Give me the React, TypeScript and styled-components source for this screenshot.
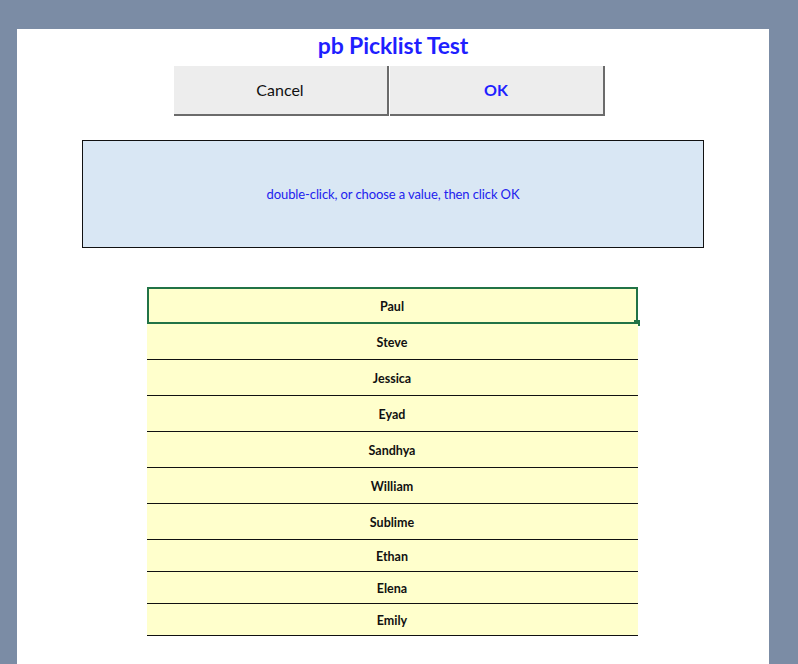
import React from "react"
import styled, { createGlobalStyle } from "styled-components"

const Global = createGlobalStyle`
    html, body {
        margin : 0;
        padding : 0;
        background : #7b8ca5;
        font-family : Lato, "Open Sans", "Liberation Sans", sans-serif;
    }
`

const Page = styled.div`
    display : flex;
    padding : 29px 29px 0 17px;
    height : 664px;
    box-sizing : border-box;
    overflow : hidden;
`

const Sheet = styled.div`
    flex : 1;
    background : white;
    display : flex;
    flex-direction : column;
    align-items : center;
    padding-top : 4px;
`

const Title = styled.h1`
    margin : 0;
    height : 28px;
    line-height : 24px;
    font-size : 23px;
    font-weight : 700;
    color : #1f1fff;
    letter-spacing : -0.1px;
`

const Buttons = styled.div`
    display : flex;
    gap : 1px;
    margin-top : 5px;
    margin-left : -8px;
`

const Button = styled.button<{ $primary?: boolean }>`
    width : 215px;
    height : 50px;
    background : #ededed;
    border : none;
    border-right : 2px solid #6b6b6b;
    border-bottom : 2px solid #6b6b6b;
    box-sizing : border-box;
    font-family : inherit;
    font-size : 16px;
    font-weight : ${p => p.$primary ? 700 : 400};
    color : ${p => p.$primary ? '#1f1fff' : '#111'};
    padding : 0 0 2px;
`

const Hint = styled.div`
    width : 622px;
    height : 108px;
    margin-top : 24px;
    border : 1px solid #111;
    box-sizing : border-box;
    background : #d9e7f4;
    display : flex;
    align-items : center;
    justify-content : center;
    color : #2222ee;
    font-size : 13px;
    letter-spacing : -0.1px;
`

const List = styled.div`
    width : 491px;
    margin-top : 39px;
    margin-left : -2px;
    display : flex;
    flex-direction : column;
`

const Row = styled.div<{ $h: number; $selected?: boolean }>`
    position : relative;
    height : ${p => p.$h}px;
    padding-top : 2px;
    background : #ffffcc;
    box-sizing : border-box;
    border-bottom : 1px solid #111;
    display : flex;
    align-items : center;
    justify-content : center;
    font-size : 12.5px;
    font-weight : 700;
    color : #111;
    ${p => p.$selected && `
        border : 2px solid #217346;
    `}
`

const Handle = styled.span`
    position : absolute;
    right : -5px;
    bottom : -5px;
    width : 6px;
    height : 6px;
    background : #217346;
    border : 1px solid white;
    border-left : none;
    border-top : none;
`

const names = [
    { n : 'Paul', h : 37 },
    { n : 'Steve', h : 36 },
    { n : 'Jessica', h : 36 },
    { n : 'Eyad', h : 36 },
    { n : 'Sandhya', h : 36 },
    { n : 'William', h : 36 },
    { n : 'Sublime', h : 36 },
    { n : 'Ethan', h : 32 },
    { n : 'Elena', h : 32 },
    { n : 'Emily', h : 32 },
]

export default function App() {
    return (
        <>
            <Global />
            <Page>
                <Sheet>
                    <Title>pb Picklist Test</Title>
                    <Buttons>
                        <Button>Cancel</Button>
                        <Button $primary>OK</Button>
                    </Buttons>
                    <Hint>double-click, or choose a value, then click OK</Hint>
                    <List>
                        {names.map((r, i) => (
                            <Row key={r.n} $h={r.h} $selected={i === 0}>
                                {r.n}
                                {i === 0 && <Handle />}
                            </Row>
                        ))}
                    </List>
                </Sheet>
            </Page>
        </>
    )
}
